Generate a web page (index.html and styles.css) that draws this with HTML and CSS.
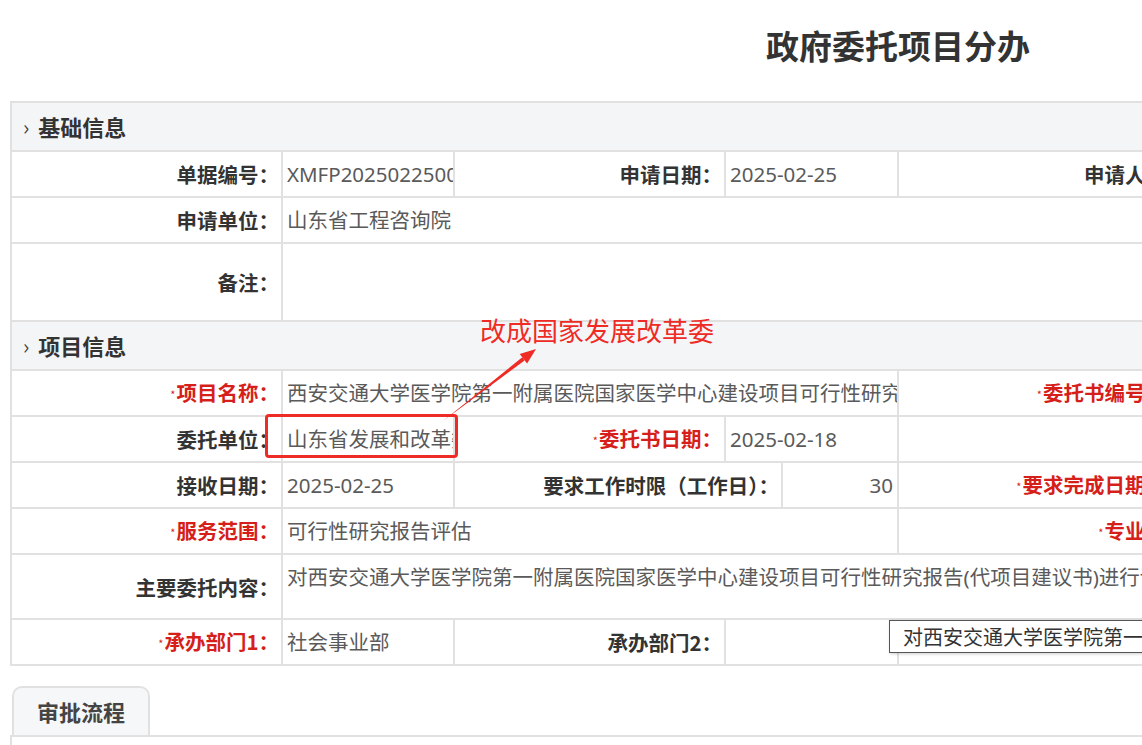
FILE: index.html
```html
<!DOCTYPE html>
<html lang="zh-CN">
<head>
    <meta charset="UTF-8">
    <title>政府委托项目分办</title>
    <link rel="stylesheet" href="styles.css">
</head>
<body>
<div class="page">
    <div class="page-title">政府委托项目分办</div>

    <table class="form-table">
        <colgroup>
            <col class="c-label"><col class="c-value"><col class="c-label"><col class="c-narrow"><col class="c-wide">
            <col class="c-label"><col class="c-value"><col class="c-label"><col class="c-value">
        </colgroup>
        <!-- 基础信息 -->
        <tr class="sec-row">
            <td colspan="9"><span class="chev">›</span>基础信息</td>
        </tr>
        <tr>
            <td class="lbl">单据编号<span class="colon">：</span></td>
            <td class="val"><div class="clip">XMFP20250225001</div></td>
            <td class="lbl">申请日期<span class="colon">：</span></td>
            <td class="val" colspan="2">2025-02-25</td>
            <td class="lbl">申请人<span class="colon">：</span></td>
            <td class="val"></td>
            <td class="lbl"></td>
            <td class="val"></td>
        </tr>
        <tr>
            <td class="lbl">申请单位<span class="colon">：</span></td>
            <td class="val" colspan="8">山东省工程咨询院</td>
        </tr>
        <tr class="tall">
            <td class="lbl">备注<span class="colon">：</span></td>
            <td class="val" colspan="8"></td>
        </tr>

        <!-- 项目信息 -->
        <tr class="sec-row">
            <td colspan="9"><span class="chev">›</span>项目信息</td>
        </tr>
        <tr>
            <td class="lbl req"><span class="star">*</span>项目名称<span class="colon">：</span></td>
            <td class="val" colspan="4"><div class="clip">西安交通大学医学院第一附属医院国家医学中心建设项目可行性研究报告评估</div></td>
            <td class="lbl req"><span class="star">*</span>委托书编号<span class="colon">：</span></td>
            <td class="val"></td>
            <td class="lbl"></td>
            <td class="val"></td>
        </tr>
        <tr>
            <td class="lbl">委托单位<span class="colon">：</span></td>
            <td class="val"><div class="clip">山东省发展和改革委员会</div></td>
            <td class="lbl req"><span class="star">*</span>委托书日期<span class="colon">：</span></td>
            <td class="val" colspan="2">2025-02-18</td>
            <td class="lbl"></td>
            <td class="val"></td>
            <td class="lbl"></td>
            <td class="val"></td>
        </tr>
        <tr>
            <td class="lbl">接收日期<span class="colon">：</span></td>
            <td class="val">2025-02-25</td>
            <td class="lbl" colspan="2">要求工作时限<span class="colon">（</span>工作日<span class="colon">）：</span></td>
            <td class="val num">30</td>
            <td class="lbl req"><span class="star">*</span>要求完成日期<span class="colon">：</span></td>
            <td class="val"></td>
            <td class="lbl"></td>
            <td class="val"></td>
        </tr>
        <tr>
            <td class="lbl req"><span class="star">*</span>服务范围<span class="colon">：</span></td>
            <td class="val" colspan="4">可行性研究报告评估</td>
            <td class="lbl req"><span class="star">*</span>专业<span class="colon">：</span></td>
            <td class="val"></td>
            <td class="lbl"></td>
            <td class="val"></td>
        </tr>
        <tr class="content-row">
            <td class="lbl">主要委托内容<span class="colon">：</span></td>
            <td class="val top" colspan="8"><div class="clip">对西安交通大学医学院第一附属医院国家医学中心建设项目可行性研究报告(代项目建议书)进行评估。</div></td>
        </tr>
        <tr>
            <td class="lbl req"><span class="star">*</span>承办部门1<span class="colon">：</span></td>
            <td class="val">社会事业部</td>
            <td class="lbl">承办部门2<span class="colon">：</span></td>
            <td class="val" colspan="2"></td>
            <td class="lbl"></td>
            <td class="val"></td>
            <td class="lbl"></td>
            <td class="val"></td>
        </tr>
    </table>

    <div class="tabs">
        <div class="tab">审批流程</div>
    </div>
    <div class="tab-panel"></div>
</div>

<!-- tooltip over 主要委托内容 -->
<div class="tooltip">对西安交通大学医学院第一附属医院国家医学中心建设项目可行性研究报告(代项目建议书)进行评估。</div>

<!-- review annotation -->
<div class="note-text">改成国家发展改革委</div>
<div class="note-box"></div>
<svg class="note-arrow" width="1142" height="745" viewBox="0 0 1142 745">
    <polygon points="443,421 524.5,360.5 522.3,357.3" fill="#ee2b24"/>
    <polygon points="536,349 527.1,363.5 519.7,354.1" fill="#ee2b24"/>
</svg>
</body>
</html>
```

FILE: styles.css
```css
html, body {
    margin: 0;
    padding: 0;
    background: #fff;
    overflow: hidden;
}
body {
    font-family: "Noto Sans CJK SC", "Microsoft YaHei", sans-serif;
    color: #333;
    width: 1142px;
    height: 745px;
    position: relative;
}
.page {
    width: 1786px;
    padding-left: 10px;
    box-sizing: border-box;
}
.page-title {
    height: 101px;
    padding-top: 22px;
    box-sizing: border-box;
    text-align: center;
    font-size: 33px;
    font-weight: bold;
    line-height: 46px;
    color: #333;
}
.form-table {
    border-collapse: collapse;
    table-layout: fixed;
    width: 1773px;
    font-size: 20.5px;
}
.c-label { width: 271px; }
.c-value { width: 172px; }
.c-narrow { width: 57px; }
.c-wide { width: 116px; }
.form-table td {
    border: 2px solid #e1e1e1;
    height: 44px;
    padding: 0;
    line-height: 24px;
    white-space: nowrap;
    overflow: hidden;
}
.sec-row td {
    height: 47px;
    background: #f4f5f7;
    font-size: 22px;
    font-weight: bold;
    color: #333;
    padding-left: 11px;
}
.chev {
    font-size: 21px;
    font-weight: normal;
    color: #444;
    margin-right: 9px;
    position: relative;
    top: -1px;
}
.lbl {
    text-align: right;
    font-weight: bold;
    color: #333;
    padding-right: 2px !important;
}
.lbl.req {
    color: #d61f1a;
}
.colon {
    font-family: "Noto Sans CJK JP", "Noto Sans CJK SC", sans-serif;
}
.star {
    font-size: 11px;
    font-weight: normal;
    vertical-align: 2px;
    margin-right: 1px;
}
.val {
    font-family: "Noto Sans", "Noto Sans CJK SC", sans-serif;
    color: #5a5a5a;
    padding-left: 4px !important;
}
.val.num {
    text-align: right;
    padding-right: 4px !important;
}
.clip {
    overflow: hidden;
    white-space: nowrap;
}
.tall td {
    height: 76px;
}
.content-row td {
    height: 63px;
}
.content-row .val.top {
    vertical-align: top;
    height: 53px;
    padding-top: 10px !important;
}
.tabs {
    margin-top: 20px;
    display: flex;
    padding-left: 2px;
}
.tab {
    width: 134px;
    height: 47px;
    border: 2px solid #e1e1e1;
    border-bottom: none;
    border-radius: 10px 10px 0 0;
    background: #f6f7f9;
    font-size: 22px;
    font-weight: bold;
    color: #444;
    line-height: 47px;
    text-align: center;
}
.tab-panel {
    border-top: 2px solid #e1e1e1;
    border-left: 2px solid #e1e1e1;
    height: 40px;
}
.tooltip {
    position: absolute;
    left: 889px;
    top: 620px;
    width: 320px;
    height: 31px;
    border: 1px solid #555;
    background: #fff;
    box-shadow: 1px 1px 3px rgba(0,0,0,0.2);
    font-size: 20px;
    line-height: 31px;
    color: #333;
    padding-left: 13px;
    white-space: nowrap;
    overflow: hidden;
}
.note-text {
    position: absolute;
    left: 480px;
    top: 313px;
    font-size: 26px;
    line-height: 34px;
    color: #ee2b24;
    white-space: nowrap;
}
.note-box {
    position: absolute;
    left: 265px;
    top: 414px;
    width: 187px;
    height: 38px;
    border: 3px solid #ee2b24;
    border-radius: 4px;
}
.note-arrow {
    position: absolute;
    left: 0;
    top: 0;
    pointer-events: none;
}
```
